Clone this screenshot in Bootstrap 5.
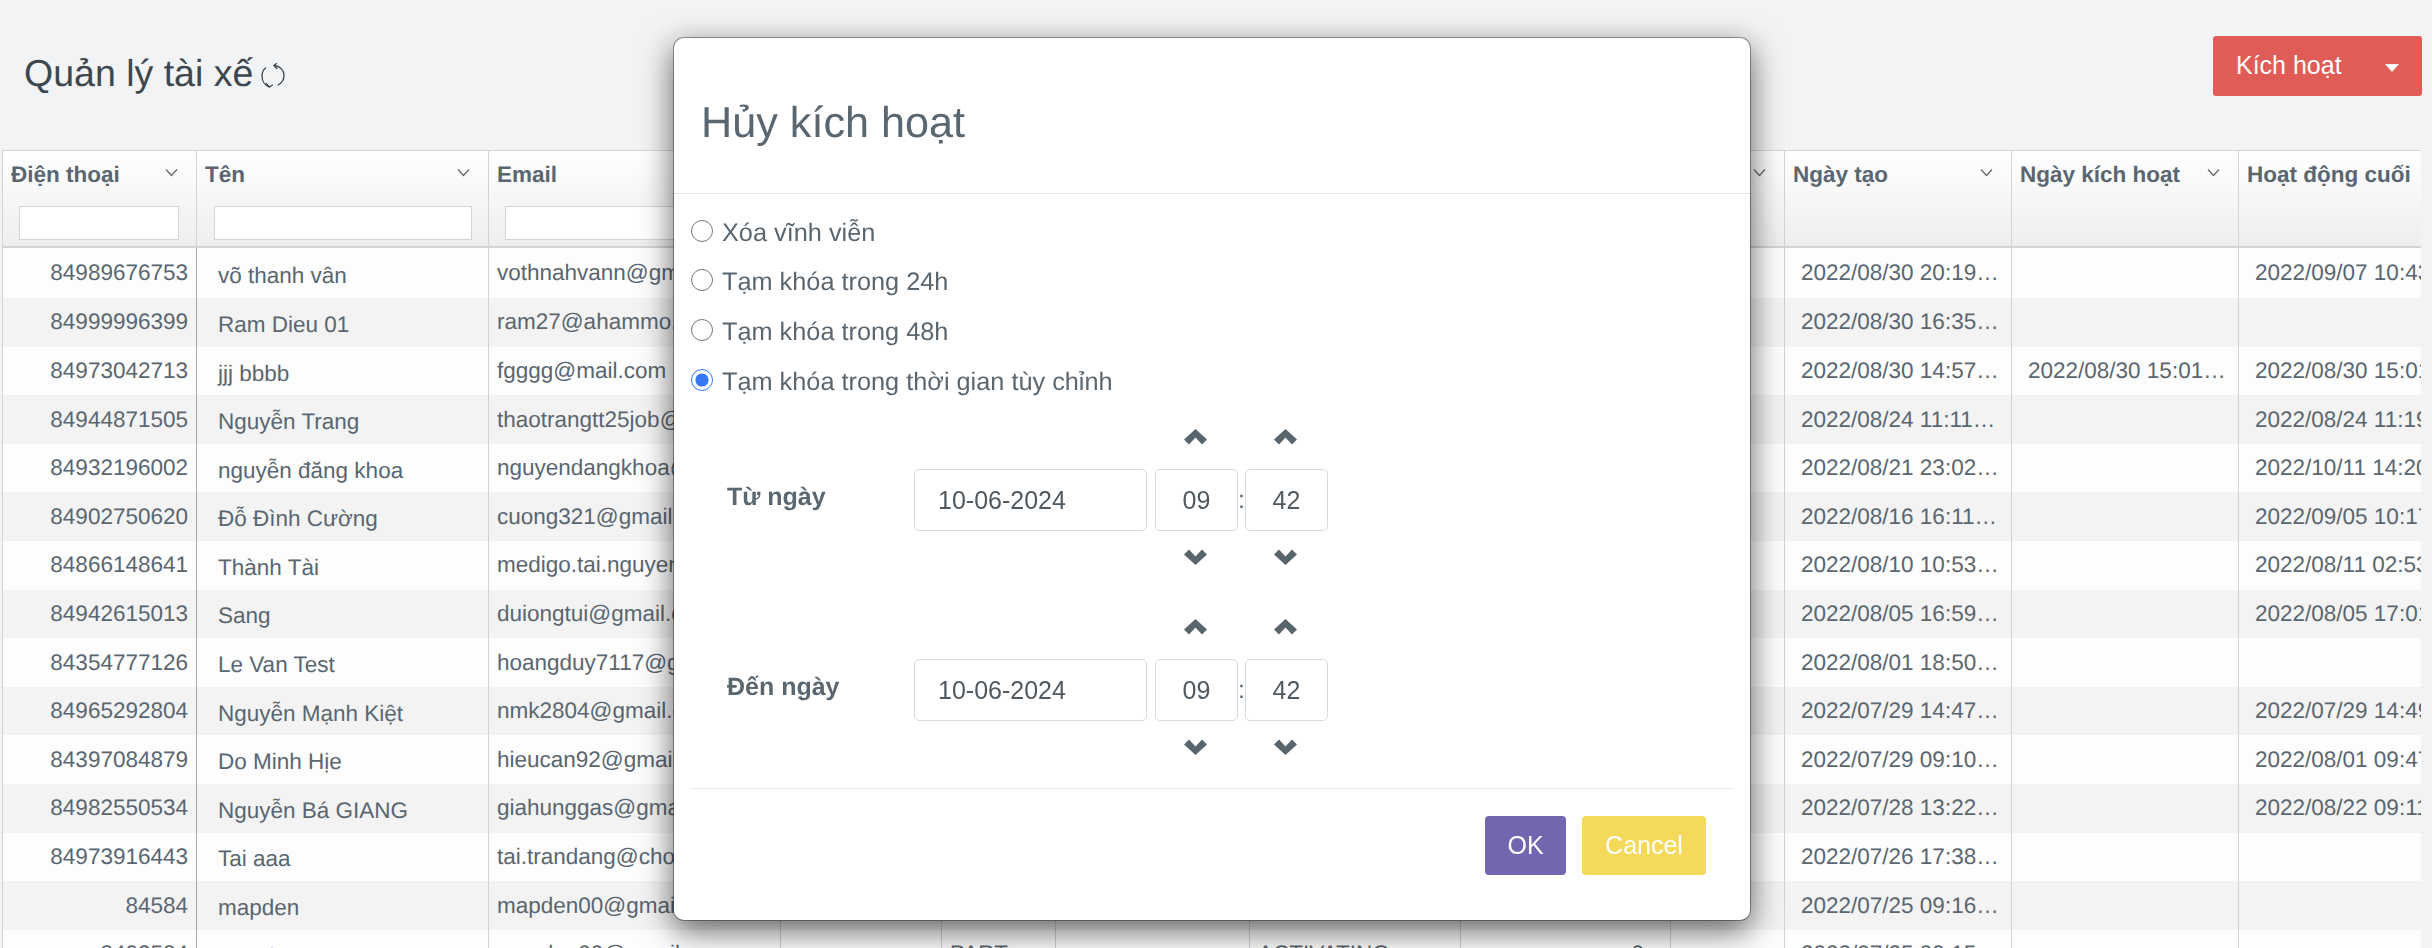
<!DOCTYPE html>
<html lang="vi">
<head>
<meta charset="utf-8">
<title>Quản lý tài xế</title>
<link href="https://cdn.jsdelivr.net/npm/bootstrap@5.3.0/dist/css/bootstrap.min.css" rel="stylesheet">
<style>
html,body{height:100%;overflow:hidden}
body{background:#f2f3f5;color:#5a6670;font-family:"Liberation Sans",Arial,sans-serif;font-size:22.5px;text-rendering:geometricPrecision}
.drv-top{height:150px;padding:36px 10px 0 24px}
.drv-title{font-size:37.5px;font-weight:400;line-height:45px;margin:15px 0 0;color:#3d474e}
.drv-title svg{margin-left:8px;vertical-align:-3px}
.drv-activate{width:209px;height:60px;padding:0 0 0 23px;border:0;border-radius:3px;background:#e05c56;color:#fff;font-size:25px;text-align:left}
.drv-activate:hover{background:#e05c56;color:#fff}
.drv-activate::after{border-top:8px solid #fff;border-left:7px solid transparent;border-right:7px solid transparent;border-bottom:0;margin-left:43px;vertical-align:2px}
.drv-gridwrap{margin-left:2px;width:2419px;height:798px;overflow:hidden;border-left:1px solid #d4d4d4}
.drv-table{table-layout:fixed;width:2463px;margin:0;border-collapse:separate;border-spacing:0;--bs-table-bg:transparent;--bs-table-color:#5a6670}
.drv-table th{height:98px;padding:0;vertical-align:top;font-size:22.5px;font-weight:700;background:linear-gradient(#fff,#eee);border:solid #d4d4d4;border-width:1px 1px 2px 0;box-shadow:none}
.drv-table td{height:48.6px;padding:0 10px;font-size:22.5px;font-weight:400;white-space:nowrap;overflow:hidden;text-overflow:ellipsis;vertical-align:middle;border:0;border-right:1px solid #d2d2d2;background:#fdfdfd;box-shadow:none}
.drv-table tbody tr:first-child td{height:50px}
.drv-table tbody tr:nth-child(even) td{background:#f3f3f3}
.drv-table td.drv-phone{text-align:right;padding-right:8px;border-right-color:#a8a8a8}
.drv-table td.drv-name{padding:5px 8px 0 21px}
.drv-table td.drv-mail{padding-left:8px}
.drv-table td.drv-date{padding:0 11px 0 16px}
.drv-table td.drv-num{text-align:right;padding-right:26px}
.drv-hlabel{height:44px;padding:4px 18px 1px 8px;line-height:32px;white-space:nowrap}
.drv-hlabel span{overflow:hidden;text-overflow:ellipsis}
.drv-hlabel svg{flex:none;margin-bottom:5px}
.drv-filter{display:block;width:calc(100% - 33px);height:34px;margin:11px 17px 0 16px;padding:0 4px;border:1px solid #d4d4d4;background:#fff;border-radius:0}
.drv-table th:nth-child(2) .drv-filter{margin-left:17px}
.drv-dialog{width:1078px;max-width:none;margin:37px 0 0 673px}
.drv-content{border:1px solid rgba(0,0,0,.35);border-radius:11px;box-shadow:0 10px 32px rgba(0,0,0,.6);color:#5a6670;height:884px}
.drv-head{height:156px;padding:0 0 0 27px;border-bottom:1px solid #e6e6e6;border-radius:0}
.drv-head .modal-title{font-size:43.2px;font-weight:400;line-height:1.2;margin-top:16px}
.drv-body{flex:none;padding:12px 17px 0}
.drv-radio{height:49.6px;margin:0;font-size:25.3px}
.drv-radio input{width:22px;height:22px;margin:0 9px 0 0;accent-color:#3478f6;flex:none}
.drv-radio span{padding-top:6px}
.drv-range{display:grid;grid-template-columns:187px 233px 8px 83px 7px 83px;grid-template-rows:40px 62px 34px;margin:25px 0 54px 36px}
.drv-range-last{margin-bottom:33px}
.drv-lbl{grid-column:1;grid-row:2;align-self:center;font-size:25px;font-weight:700;margin:0 0 6px}
.drv-date-in{grid-column:2;grid-row:2}
.drv-h{grid-column:4}
.drv-colon{grid-column:5;grid-row:2;align-self:center;font-size:25px;line-height:1;text-align:center}
.drv-m{grid-column:6}
.drv-range .form-control{height:62px;padding:0 23px;font-size:25px;color:#50595f;border-color:#d4dde0;border-radius:5px}
.drv-range .drv-t{grid-row:2;padding:0;text-align:center}
.drv-up{grid-row:1;margin-left:29px;display:block}
.drv-down{grid-row:3;align-self:end;margin-left:29px;display:block}
.drv-foot{flex:1;margin:0 17px;padding:27px 27px 0 0;border-top:1px solid #e6e6e6;border-radius:0;justify-content:flex-end;align-items:flex-start}
.drv-foot .btn{height:59px;margin:0 0 0 16px;padding:0;border:0;border-radius:4px;font-size:25px;color:#fff}
.drv-ok,.drv-ok:hover{width:81px;background:#7266b1}
.drv-cancel,.drv-cancel:hover{width:124px;background:#f4d95a}
</style>
</head>
<body>
<div class="drv-top d-flex justify-content-between align-items-start">
  <h1 class="drv-title">Quản lý tài xế<svg width="24" height="26" viewBox="0 0 24 26" fill="none" stroke="#3d474e" stroke-width="1.3" stroke-linecap="round" stroke-linejoin="round"><path d="M13 2.5C19 3 23 7 23 12.5c0 4-2.300 7.500-6 9.500"/><path d="M15.500 .5L13 2.500l2.800 3"/><path d="M4.500 5C2.300 7 1 9.800 1 13c0 5 3 9.500 7.500 11"/><path d="M5.200 20.500l3.300 3.500 3-2"/></svg></h1>
  <button type="button" class="btn dropdown-toggle drv-activate">Kích hoạt</button>
</div>

<div class="drv-gridwrap">
<table class="table drv-table">
<colgroup><col style="width:194px"><col style="width:292px"><col style="width:292px"><col style="width:161px"><col style="width:114px"><col style="width:194px"><col style="width:211px"><col style="width:210px"><col style="width:114px"><col style="width:227px"><col style="width:227px"><col style="width:227px"></colgroup>
<thead><tr>
<th><div class="drv-hlabel d-flex justify-content-between align-items-center"><span>Điện thoại</span><svg width="13" height="9" viewBox="0 0 13 9" fill="none" stroke="#666" stroke-width="1.200"><path d="M1 1.500l5.500 6 5.500-6"/></svg></div><input class="drv-filter" type="text" aria-label="Điện thoại"></th>
<th><div class="drv-hlabel d-flex justify-content-between align-items-center"><span>Tên</span><svg width="13" height="9" viewBox="0 0 13 9" fill="none" stroke="#666" stroke-width="1.200"><path d="M1 1.500l5.500 6 5.500-6"/></svg></div><input class="drv-filter" type="text" aria-label="Tên"></th>
<th><div class="drv-hlabel d-flex justify-content-between align-items-center"><span>Email</span><svg width="13" height="9" viewBox="0 0 13 9" fill="none" stroke="#666" stroke-width="1.200"><path d="M1 1.500l5.500 6 5.500-6"/></svg></div><input class="drv-filter" type="text" aria-label="Email"></th>
<th></th><th></th><th></th><th></th><th></th>
<th><div class="drv-hlabel d-flex justify-content-end align-items-center"><svg width="13" height="9" viewBox="0 0 13 9" fill="none" stroke="#666" stroke-width="1.200"><path d="M1 1.500l5.500 6 5.500-6"/></svg></div></th>
<th><div class="drv-hlabel d-flex justify-content-between align-items-center"><span>Ngày tạo</span><svg width="13" height="9" viewBox="0 0 13 9" fill="none" stroke="#666" stroke-width="1.200"><path d="M1 1.500l5.500 6 5.500-6"/></svg></div></th>
<th><div class="drv-hlabel d-flex justify-content-between align-items-center"><span>Ngày kích hoạt</span><svg width="13" height="9" viewBox="0 0 13 9" fill="none" stroke="#666" stroke-width="1.200"><path d="M1 1.500l5.500 6 5.500-6"/></svg></div></th>
<th><div class="drv-hlabel d-flex justify-content-between align-items-center"><span>Hoạt động cuối</span></div></th>
</tr></thead>
<tbody>
<tr><td class="drv-phone">84989676753</td><td class="drv-name">võ thanh vân</td><td class="drv-mail">vothnahvann@gmail.com</td><td></td><td></td><td></td><td></td><td></td><td></td><td class="drv-date">2022/08/30 20:19:45</td><td class="drv-date"></td><td class="drv-date">2022/09/07 10:43:12</td></tr>
<tr><td class="drv-phone">84999996399</td><td class="drv-name">Ram Dieu 01</td><td class="drv-mail">ram27@ahammo.com</td><td></td><td></td><td></td><td></td><td></td><td></td><td class="drv-date">2022/08/30 16:35:20</td><td class="drv-date"></td><td class="drv-date"></td></tr>
<tr><td class="drv-phone">84973042713</td><td class="drv-name">jjj bbbb</td><td class="drv-mail">fgggg@mail.com</td><td></td><td></td><td></td><td></td><td></td><td></td><td class="drv-date">2022/08/30 14:57:08</td><td class="drv-date">2022/08/30 15:01:33</td><td class="drv-date">2022/08/30 15:01:40</td></tr>
<tr><td class="drv-phone">84944871505</td><td class="drv-name">Nguyễn Trang</td><td class="drv-mail">thaotrangtt25job@gmail.com</td><td></td><td></td><td></td><td></td><td></td><td></td><td class="drv-date">2022/08/24 11:11:02</td><td class="drv-date"></td><td class="drv-date">2022/08/24 11:19:50</td></tr>
<tr><td class="drv-phone">84932196002</td><td class="drv-name">nguyễn đăng khoa</td><td class="drv-mail">nguyendangkhoa@gmail.com</td><td></td><td></td><td></td><td></td><td></td><td></td><td class="drv-date">2022/08/21 23:02:17</td><td class="drv-date"></td><td class="drv-date">2022/10/11 14:20:05</td></tr>
<tr><td class="drv-phone">84902750620</td><td class="drv-name">Đỗ Đình Cường</td><td class="drv-mail">cuong321@gmail.com</td><td></td><td></td><td></td><td></td><td></td><td></td><td class="drv-date">2022/08/16 16:11:29</td><td class="drv-date"></td><td class="drv-date">2022/09/05 10:17:44</td></tr>
<tr><td class="drv-phone">84866148641</td><td class="drv-name">Thành Tài</td><td class="drv-mail">medigo.tai.nguyen@gmail.com</td><td></td><td></td><td></td><td></td><td></td><td></td><td class="drv-date">2022/08/10 10:53:36</td><td class="drv-date"></td><td class="drv-date">2022/08/11 02:53:10</td></tr>
<tr><td class="drv-phone">84942615013</td><td class="drv-name">Sang</td><td class="drv-mail">duiongtui@gmail.com</td><td></td><td></td><td></td><td></td><td></td><td></td><td class="drv-date">2022/08/05 16:59:21</td><td class="drv-date"></td><td class="drv-date">2022/08/05 17:01:09</td></tr>
<tr><td class="drv-phone">84354777126</td><td class="drv-name">Le Van Test</td><td class="drv-mail">hoangduy7117@gmail.com</td><td></td><td></td><td></td><td></td><td></td><td></td><td class="drv-date">2022/08/01 18:50:47</td><td class="drv-date"></td><td class="drv-date"></td></tr>
<tr><td class="drv-phone">84965292804</td><td class="drv-name">Nguyễn Mạnh Kiệt</td><td class="drv-mail">nmk2804@gmail.com</td><td></td><td></td><td></td><td></td><td></td><td></td><td class="drv-date">2022/07/29 14:47:15</td><td class="drv-date"></td><td class="drv-date">2022/07/29 14:49:28</td></tr>
<tr><td class="drv-phone">84397084879</td><td class="drv-name">Do Minh Hịe</td><td class="drv-mail">hieucan92@gmail.com</td><td></td><td></td><td></td><td></td><td></td><td></td><td class="drv-date">2022/07/29 09:10:39</td><td class="drv-date"></td><td class="drv-date">2022/08/01 09:47:52</td></tr>
<tr><td class="drv-phone">84982550534</td><td class="drv-name">Nguyễn Bá GIANG</td><td class="drv-mail">giahunggas@gmail.com</td><td></td><td></td><td></td><td></td><td></td><td></td><td class="drv-date">2022/07/28 13:22:06</td><td class="drv-date"></td><td class="drv-date">2022/08/22 09:11:18</td></tr>
<tr><td class="drv-phone">84973916443</td><td class="drv-name">Tai aaa</td><td class="drv-mail">tai.trandang@chotot.vn</td><td></td><td></td><td></td><td></td><td></td><td></td><td class="drv-date">2022/07/26 17:38:41</td><td class="drv-date"></td><td class="drv-date"></td></tr>
<tr><td class="drv-phone">84584</td><td class="drv-name">mapden</td><td class="drv-mail">mapden00@gmail.com</td><td></td><td></td><td></td><td></td><td></td><td></td><td class="drv-date">2022/07/25 09:16:24</td><td class="drv-date"></td><td class="drv-date"></td></tr>
<tr><td class="drv-phone">8492584</td><td class="drv-name">mapden</td><td class="drv-mail">mapden00@gmail.com</td><td></td><td class="drv-mail">PART</td><td></td><td class="drv-mail">ACTIVATING</td><td class="drv-num">0</td><td></td><td class="drv-date">2022/07/25 09:15:03</td><td class="drv-date"></td><td class="drv-date"></td></tr>
</tbody>
</table>
</div>

<div class="modal d-block" role="dialog" aria-modal="true">
  <div class="modal-dialog drv-dialog">
    <div class="modal-content drv-content">
      <div class="modal-header drv-head"><h4 class="modal-title">Hủy kích hoạt</h4></div>
      <div class="modal-body drv-body">
        <label class="drv-radio d-flex align-items-center"><input type="radio" name="drvlock"><span>Xóa vĩnh viễn</span></label>
        <label class="drv-radio d-flex align-items-center"><input type="radio" name="drvlock"><span>Tạm khóa trong 24h</span></label>
        <label class="drv-radio d-flex align-items-center"><input type="radio" name="drvlock"><span>Tạm khóa trong 48h</span></label>
        <label class="drv-radio d-flex align-items-center"><input type="radio" name="drvlock" checked><span>Tạm khóa trong thời gian tùy chỉnh</span></label>

        <div class="drv-range">
          <label class="drv-lbl">Từ ngày</label>
          <input class="form-control drv-date-in" type="text" value="10-06-2024">
          <svg class="drv-h drv-up" width="23" height="16" viewBox="0 0 23 16" fill="#59656d"><polygon points="11.500,0 23,10.500 18,15.500 11.500,8.500 5,15.500 0,10.500"/></svg>
          <input class="form-control drv-t drv-h" type="text" value="09">
          <svg class="drv-h drv-down" width="23" height="16" viewBox="0 0 23 16" fill="#59656d"><polygon points="11.500,16 23,5.500 18,.5 11.500,7.500 5,.5 0,5.500"/></svg>
          <span class="drv-colon">:</span>
          <svg class="drv-m drv-up" width="23" height="16" viewBox="0 0 23 16" fill="#59656d"><polygon points="11.500,0 23,10.500 18,15.500 11.500,8.500 5,15.500 0,10.500"/></svg>
          <input class="form-control drv-t drv-m" type="text" value="42">
          <svg class="drv-m drv-down" width="23" height="16" viewBox="0 0 23 16" fill="#59656d"><polygon points="11.500,16 23,5.500 18,.5 11.500,7.500 5,.5 0,5.500"/></svg>
        </div>

        <div class="drv-range drv-range-last">
          <label class="drv-lbl">Đến ngày</label>
          <input class="form-control drv-date-in" type="text" value="10-06-2024">
          <svg class="drv-h drv-up" width="23" height="16" viewBox="0 0 23 16" fill="#59656d"><polygon points="11.500,0 23,10.500 18,15.500 11.500,8.500 5,15.500 0,10.500"/></svg>
          <input class="form-control drv-t drv-h" type="text" value="09">
          <svg class="drv-h drv-down" width="23" height="16" viewBox="0 0 23 16" fill="#59656d"><polygon points="11.500,16 23,5.500 18,.5 11.500,7.500 5,.5 0,5.500"/></svg>
          <span class="drv-colon">:</span>
          <svg class="drv-m drv-up" width="23" height="16" viewBox="0 0 23 16" fill="#59656d"><polygon points="11.500,0 23,10.500 18,15.500 11.500,8.500 5,15.500 0,10.500"/></svg>
          <input class="form-control drv-t drv-m" type="text" value="42">
          <svg class="drv-m drv-down" width="23" height="16" viewBox="0 0 23 16" fill="#59656d"><polygon points="11.500,16 23,5.500 18,.5 11.500,7.500 5,.5 0,5.500"/></svg>
        </div>
      </div>
      <div class="modal-footer drv-foot d-flex">
        <button type="button" class="btn drv-ok">OK</button>
        <button type="button" class="btn drv-cancel">Cancel</button>
      </div>
    </div>
  </div>
</div>
</body>
</html>
